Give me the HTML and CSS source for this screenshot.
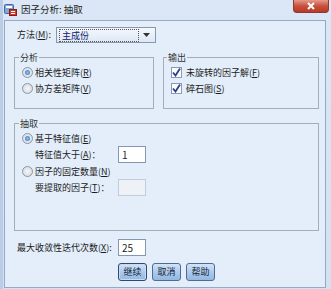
FILE: index.html
```html
<!DOCTYPE html>
<html lang="zh-CN">
<head>
  <meta charset="UTF-8">
  <title>因子分析: 抽取</title>
  <link rel="stylesheet" href="styles.css">
</head>
<body>
  <div class="window">
    <!-- Title bar -->
    <div class="titlebar">
      <svg class="app-icon" width="13" height="13" viewBox="0 0 13 13">
        <rect x="0.5" y="1.5" width="9" height="9" rx="1" fill="#7fa6d6" stroke="#3f6aa3"/>
        <rect x="2" y="3" width="6" height="2" fill="#fff"/>
        <rect x="5.5" y="6.5" width="7" height="6" fill="#d23a2e" stroke="#8c1d16"/>
        <rect x="7" y="8" width="4" height="1" fill="#fff"/>
        <rect x="7" y="10" width="4" height="1" fill="#fff"/>
      </svg>
      <span class="title">因子分析: 抽取</span>
      <div class="close-btn">
        <svg width="10" height="8" viewBox="0 0 10 8">
          <path d="M2 1 L8 7 M8 1 L2 7" stroke="#fff" stroke-width="2"/>
        </svg>
      </div>
    </div>

    <div class="client">
      <!-- Method -->
      <div class="method-row">
        <span class="label method-label">方法(<u>M</u>):</span>
        <div class="dropdown">
          <span class="dropdown-value">主成份</span>
          <svg class="dropdown-arrow" width="7" height="4" viewBox="0 0 7 4">
            <path d="M0 0 L7 0 L3.5 4 Z" fill="#333"/>
          </svg>
        </div>
      </div>

      <!-- Analysis / Output -->
      <div class="group-row">
        <div class="group group-analysis">
          <span class="group-title">分析</span>
          <div class="opt"><span class="radio checked"></span>相关性矩阵(<u>R</u>)</div>
          <div class="opt"><span class="radio"></span>协方差矩阵(<u>V</u>)</div>
        </div>
        <div class="group group-output">
          <span class="group-title">输出</span>
          <div class="opt"><span class="check"><svg width="9" height="9" viewBox="0 0 9 9"><path d="M1 4.5 L3.5 7.5 L8 0.5" fill="none" stroke="#2b3f8c" stroke-width="1.8"/></svg></span>未旋转的因子解(<u>F</u>)</div>
          <div class="opt"><span class="check"><svg width="9" height="9" viewBox="0 0 9 9"><path d="M1 4.5 L3.5 7.5 L8 0.5" fill="none" stroke="#2b3f8c" stroke-width="1.8"/></svg></span>碎石图(<u>S</u>)</div>
        </div>
      </div>

      <!-- Extract -->
      <div class="group group-extract">
        <span class="group-title">抽取</span>
        <div class="opt"><span class="radio checked"></span>基于特征值(<u>E</u>)</div>
        <div class="field-row">
          <span class="field-label">特征值大于(<u>A</u>)：</span>
          <div class="textbox">1</div>
        </div>
        <div class="opt"><span class="radio"></span>因子的固定数量(<u>N</u>)</div>
        <div class="field-row">
          <span class="field-label">要提取的因子(<u>T</u>)：</span>
          <div class="textbox disabled"></div>
        </div>
      </div>

      <!-- Iterations -->
      <div class="iter-row">
        <span class="label">最大收敛性迭代次数(<u>X</u>):</span>
        <div class="textbox">25</div>
      </div>

      <!-- Buttons -->
      <div class="buttons">
        <div class="btn default">继续</div>
        <div class="btn">取消</div>
        <div class="btn">帮助</div>
      </div>
    </div>
  </div>
</body>
</html>
```

FILE: styles.css
```css
/* General */
body {
  margin: 0;
  background: #d6e3f3;
  font-family: "Noto Sans CJK SC", "DejaVu Sans", sans-serif;
  font-size: 9px;
  color: #1b1b1b;
}
u {
  text-decoration: underline;
  text-underline-offset: 1px;
}

/* Window frame */
.window {
  width: 331px;
  height: 289px;
  box-sizing: border-box;
  background: linear-gradient(#dbe7f6, #d3e1f3);
  border-left: 3px solid #b9cde7;
  display: flex;
  flex-direction: column;
}

/* Title bar */
.titlebar {
  height: 20px;
  display: flex;
  align-items: flex-start;
  padding-left: 1px;
}
.app-icon {
  margin-top: 3px;
}
.title {
  margin-left: 4px;
  margin-top: 3px;
  line-height: 12px;
  font-size: 9.5px;
  color: #222;
}
.close-btn {
  margin-left: auto;
  margin-right: 2px;
  width: 36px;
  height: 13px;
  box-sizing: border-box;
  border: 1px solid #8a3a30;
  border-top: none;
  border-radius: 0 0 4px 4px;
  background: linear-gradient(#e59a8c, #c8503c 50%, #b83a28);
  display: flex;
  align-items: center;
  justify-content: center;
}

/* Client area */
.client {
  margin: 0 5px 1px 1px;
  flex: 1;
  border: 1px solid #97a9c0;
  background: #e3eefa;
  padding: 6px 6px 6px 9px;
  display: flex;
  flex-direction: column;
}

.method-row {
  height: 16px;
  display: flex;
  align-items: center;
  padding-left: 3px;
}
.label {
  line-height: 16px;
}
.method-label {
  width: 39px;
}
.dropdown {
  width: 100px;
  height: 16px;
  box-sizing: border-box;
  border: 1px solid #8798ae;
  background: linear-gradient(#f4f8fd, #dde8f5);
  display: flex;
  align-items: center;
  padding: 0 5px 0 2px;
}
.dropdown-value {
  flex: 1;
  line-height: 11px;
  color: #10206a;
  border: 1px dotted #555;
  padding-left: 2px;
  margin-right: 4px;
}

/* Groups */
.group-row {
  margin-top: 14px;
  display: flex;
  gap: 9px;
}
.group {
  border: 1px solid #a4aebb;
  padding: 4px 0 0 7px;
  box-sizing: border-box;
  display: flex;
  flex-direction: column;
}
.group-analysis {
  width: 140px;
  height: 52px;
}
.group-output {
  width: 156px;
  height: 52px;
  padding-left: 6px;
}
.group-title {
  align-self: flex-start;
  margin: -10px 0 0 -3px;
  padding: 0 1px;
  background: #e3eefa;
  line-height: 12px;
  color: #333;
}
.opt {
  height: 16px;
  display: flex;
  align-items: center;
}
.radio {
  width: 11px;
  height: 11px;
  box-sizing: border-box;
  border-radius: 50%;
  border: 1px solid #8b97a6;
  background: radial-gradient(#f4f6f9, #cfd6df);
  margin-right: 2px;
  display: flex;
  align-items: center;
  justify-content: center;
}
.radio.checked::after {
  content: "";
  width: 5px;
  height: 5px;
  border-radius: 50%;
  background: radial-gradient(#8fc2f2, #2f6fbd);
}
.check {
  width: 11px;
  height: 11px;
  box-sizing: border-box;
  border: 1px solid #8e9aab;
  background: #fbfcfe;
  margin: 0 4px 0 1px;
  display: flex;
  align-items: center;
  justify-content: center;
}

.group-extract {
  margin-top: 14px;
  width: 305px;
  height: 108px;
}
.field-row {
  height: 17px;
  display: flex;
  align-items: center;
  padding-left: 13px;
}
.field-label {
  width: 83px;
}
.textbox {
  width: 28px;
  height: 17px;
  box-sizing: border-box;
  border: 1px solid #8397b0;
  background: #fff;
  padding-left: 3px;
  line-height: 15px;
  font-size: 10px;
}
.textbox.disabled {
  background: #eef2f7;
  border-color: #c3ccd8;
}

.iter-row {
  margin-top: 8px;
  height: 17px;
  display: flex;
  align-items: center;
  padding-left: 3px;
}
.iter-row .label {
  width: 101px;
}

/* Buttons */
.buttons {
  margin-top: 7px;
  display: flex;
  gap: 5px;
  padding-left: 104px;
}
.btn {
  width: 29px;
  height: 18px;
  box-sizing: border-box;
  border: 1px solid #4d6d93;
  border-radius: 3px;
  background: linear-gradient(#d3e4f6, #a9c8ea 55%, #94b8e2);
  line-height: 16px;
  text-align: center;
  color: #14233a;
}
.btn.default {
  border-color: #2d4a70;
  box-shadow: inset 0 0 0 1px #c6dbf2;
}
```
